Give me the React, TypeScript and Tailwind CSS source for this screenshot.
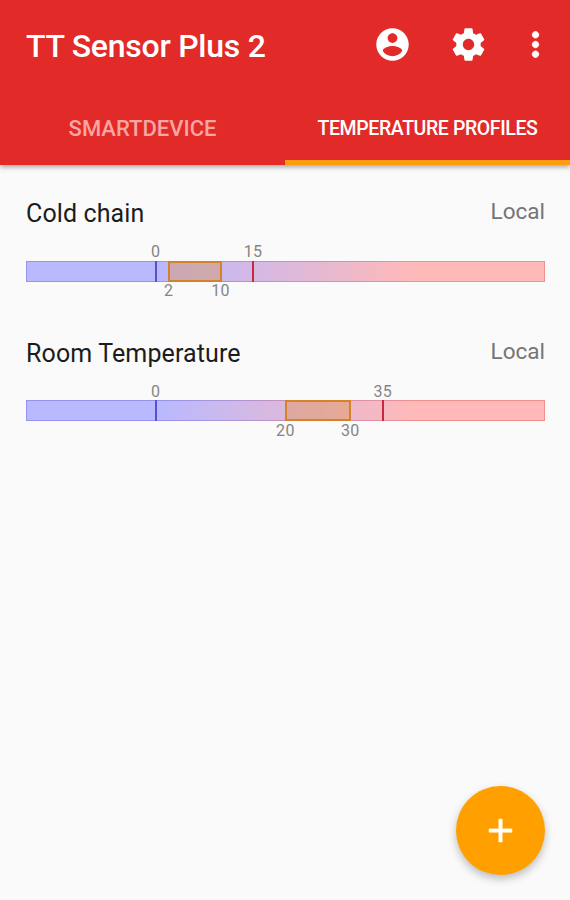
import React, { useState } from "react";

const RANGE_MIN = -20;
const RANGE_MAX = 60;

const tabs = [
  {
    id: "device",
    label: "SMARTDEVICE",
    text: "text-[22px] tracking-[0px] pt-[8px]",
  },
  {
    id: "profiles",
    label: "TEMPERATURE PROFILES",
    text: "text-[19.5px] tracking-[-0.4px] pt-[8px]",
  },
];

const profiles = [
  { name: "Cold chain", source: "Local", low: 0, high: 15, from: 2, to: 10 },
  {
    name: "Room Temperature",
    source: "Local",
    low: 0,
    high: 35,
    from: 20,
    to: 30,
  },
];

// position on the scale, in percent
function pos(value: number) {
  return ((value - RANGE_MIN) / (RANGE_MAX - RANGE_MIN)) * 100;
}

function Icon({ d, className = "" }: { d: string; className?: string }) {
  return (
    <svg
      viewBox="0 0 24 24"
      fill="currentColor"
      className={`w-[39px] h-[39px] ${className}`}
    >
      <path d={d} />
    </svg>
  );
}

function ScaleLabel({ value, className }: { value: number; className: string }) {
  return (
    <span
      className={`absolute -translate-x-1/2 text-[16px] leading-[16px] tracking-[0.4px] text-[#858585] ${className}`}
      style={{ left: `${pos(value)}%` }}
    >
      {value}
    </span>
  );
}

function RangeBar({ profile }: { profile: (typeof profiles)[number] }) {
  const { low, high, from, to } = profile;
  return (
    <div className="relative h-[21px]">
      <div className="h-full border border-[#9090ee] bg-[linear-gradient(90deg,#b9b9ff_25%,#ffb9b9_75%)] [border-image:linear-gradient(90deg,#9494f0_25%,#f29090_75%)_1]" />
      <div
        className="absolute inset-y-0 -ml-px border-2 border-[#d68229] bg-[#dc9040]/38"
        style={{
          left: `${pos(from)}%`,
          width: `calc(${pos(to) - pos(from)}% + 2px)`,
        }}
      />
      <div
        className="absolute inset-y-0 w-[2px] -translate-x-1/2 bg-[#5a4fd0]"
        style={{ left: `${pos(low)}%` }}
      />
      <div
        className="absolute inset-y-0 w-[2px] -translate-x-1/2 bg-[#c62a40]"
        style={{ left: `${pos(high)}%` }}
      />
      <ScaleLabel value={low} className="-top-[16.5px]" />
      <ScaleLabel value={high} className="-top-[16.5px]" />
      <ScaleLabel value={from} className="top-[22.25px]" />
      <ScaleLabel value={to} className="top-[22.25px]" />
    </div>
  );
}

export default function App() {
  const [activeTab, setActiveTab] = useState("profiles");

  return (
    <div className="relative flex flex-col h-[900px] w-[570px] overflow-hidden bg-[#fafafa] font-[Roboto,sans-serif]">
      {/* APP BAR */}
      <header className="h-[164.5px] shrink-0 bg-[#e22b28] text-white shadow-[0_2px_5px_rgba(0,0,0,0.35)]">
        <div className="flex items-center h-[89px] pl-[26px] pr-[15px]">
          <h1 className="flex-1 text-[32px] font-medium tracking-[-0.25px] whitespace-nowrap pt-[2px]">
            TT Sensor Plus 2
          </h1>
          <button className="mr-[37px]">
            <Icon d="M12 2C6.48 2 2 6.48 2 12s4.48 10 10 10 10-4.48 10-10S17.52 2 12 2zm0 3c1.66 0 3 1.34 3 3s-1.34 3-3 3-3-1.34-3-3 1.34-3 3-3zm0 14.2c-2.5 0-4.71-1.28-6-3.22.03-1.99 4-3.08 6-3.08 1.99 0 5.97 1.09 6 3.08-1.29 1.94-3.5 3.22-6 3.22z" />
          </button>
          <button className="mr-[28px]">
            <Icon d="M19.43 12.98c.04-.32.07-.64.07-.98s-.03-.66-.07-.98l2.11-1.65c.19-.15.24-.42.12-.64l-2-3.46c-.12-.22-.39-.3-.61-.22l-2.49 1c-.52-.4-1.08-.73-1.69-.98l-.38-2.65C14.46 2.18 14.25 2 14 2h-4c-.25 0-.46.18-.49.42l-.38 2.65c-.61.25-1.17.59-1.69.98l-2.49-1c-.23-.09-.49 0-.61.22l-2 3.46c-.13.22-.07.49.12.64l2.11 1.65c-.04.32-.07.65-.07.98s.03.66.07.98l-2.11 1.65c-.19.15-.24.42-.12.64l2 3.46c.12.22.39.3.61.22l2.49-1c.52.4 1.08.73 1.69.98l.38 2.65c.03.24.24.42.49.42h4c.25 0 .46-.18.49-.42l.38-2.65c.61-.25 1.17-.59 1.69-.98l2.49 1c.23.09.49 0 .61-.22l2-3.46c.12-.22.07-.49-.12-.64l-2.11-1.65zM12 15.5c-1.93 0-3.5-1.57-3.5-3.5s1.57-3.5 3.5-3.5 3.5 1.57 3.5 3.5-1.57 3.5-3.5 3.5z" />
          </button>
          <button>
            <Icon
              className="stroke-current stroke-[0.5]"
              d="M12 8c1.1 0 2-.9 2-2s-.9-2-2-2-2 .9-2 2 .9 2 2 2zm0 2c-1.1 0-2 .9-2 2s.9 2 2 2 2-.9 2-2-.9-2-2-2zm0 6c-1.1 0-2 .9-2 2s.9 2 2 2 2-.9 2-2-.9-2-2-2z"
            />
          </button>
        </div>

        {/* TABS */}
        <div className="grid grid-cols-2 h-[75.5px]">
          {tabs.map((tab) => (
            <button
              key={tab.id}
              onClick={() => setActiveTab(tab.id)}
              className={`border-b-[5px] font-medium whitespace-nowrap ${tab.text} ${
                activeTab === tab.id
                  ? "border-[#ff9c12] text-white"
                  : "border-transparent text-[#f8a5a3]"
              }`}
            >
              {tab.label}
            </button>
          ))}
        </div>
      </header>

      {/* PROFILES */}
      <main className="flex flex-col gap-[44.5px] pt-[34.5px] pl-[26px] pr-[25px]">
        {profiles.map((profile) => (
          <div key={profile.name} className="h-[95px]">
            <div className="flex justify-between items-start h-[61.75px]">
              <h2 className="text-[25px] leading-[30px] tracking-[0.12px] text-[#1c1c1c]">
                {profile.name}
              </h2>
              <span className="-mt-px text-[22.5px] leading-[26px] text-[#757575]">
                {profile.source}
              </span>
            </div>
            <RangeBar profile={profile} />
          </div>
        ))}
      </main>

      <button className="absolute right-[25px] bottom-[25px] flex items-center justify-center w-[89px] h-[89px] rounded-full bg-[#ffa000] text-white shadow-[0_4px_8px_rgba(0,0,0,0.25)]">
        <Icon
          className="stroke-current stroke-[0.4]"
          d="M19 13h-6v6h-2v-6H5v-2h6V5h2v6h6v2z"
        />
      </button>
    </div>
  );
}
